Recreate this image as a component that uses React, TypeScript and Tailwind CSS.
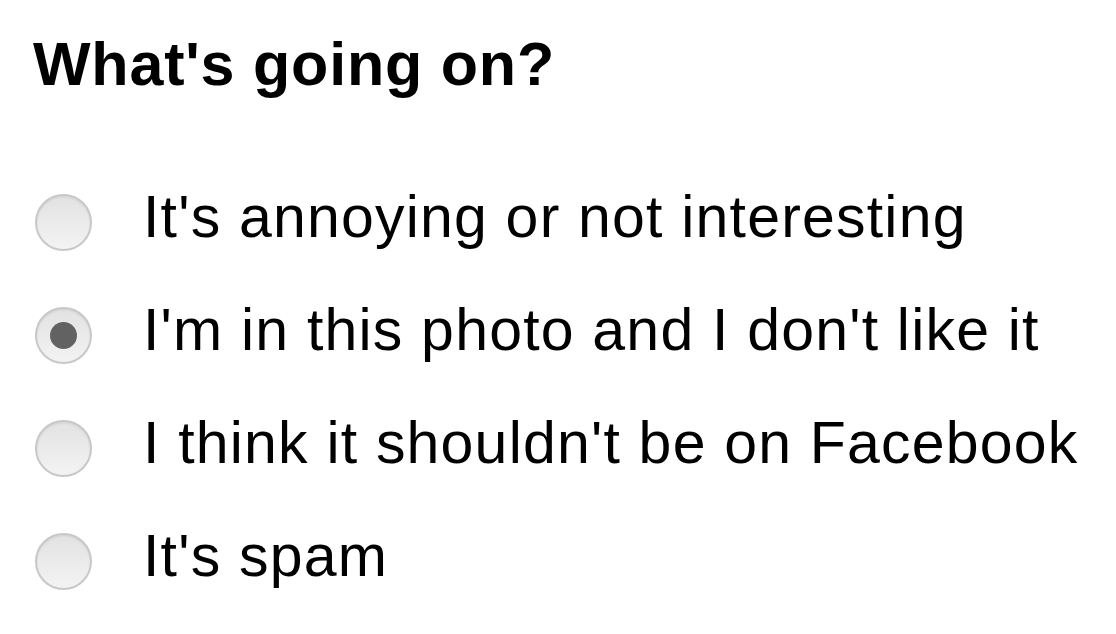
import React from 'react';

const options = [
    { id: 'annoying', label: "It's annoying or not interesting", checked: false },
    { id: 'in-photo', label: "I'm in this photo and I don't like it", checked: true },
    { id: 'not-facebook', label: "I think it shouldn't be on Facebook", checked: false },
    { id: 'spam', label: "It's spam", checked: false }
];

const Radio: React.FC<{ checked: boolean }> = ({ checked }) => (
    <span className="flex h-[57px] w-[57px] shrink-0 items-center justify-center rounded-full border-2 border-[#c8c8c8] bg-gradient-to-b from-[#e2e2e2] to-[#f3f3f3] shadow-[inset_0_1px_2px_rgba(0,0,0,0.08)]">
        {checked && <span className="h-[27px] w-[27px] rounded-full bg-[#626262]" />}
    </span>
);

export default function App() {
    return (
        <div className="h-[634px] w-[1116px] bg-white font-['Liberation_Sans',Arial,sans-serif] text-black">
            <h1 className="pl-[33px] pt-[29px] text-[61px] font-bold leading-[70px] tracking-[0.8px]">What's going on?</h1>
            <div className="mt-[88px] flex flex-col gap-[43px] pl-[35px]">
                {options.map((option) => (
                    <label key={option.id} className="flex h-[70px] items-center gap-[51px]">
                        <Radio checked={option.checked} />
                        <span className="pb-[10px] text-[59px] leading-[70px] tracking-[1.2px]">{option.label}</span>
                    </label>
                ))}
            </div>
        </div>
    );
}
